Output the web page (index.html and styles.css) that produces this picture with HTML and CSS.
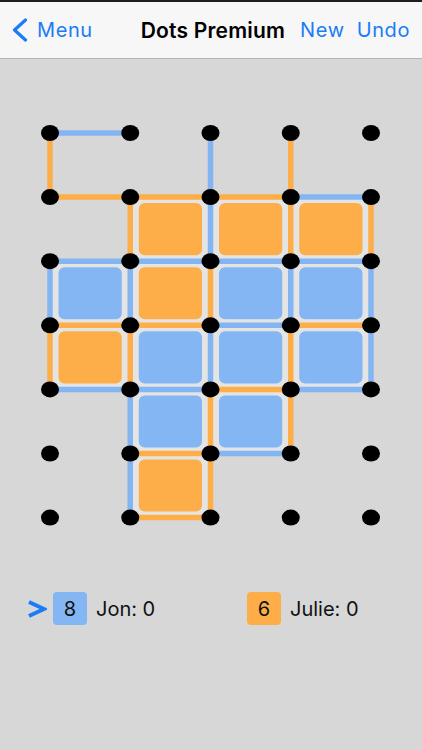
FILE: index.html
```html
<!DOCTYPE html>
<html>
<head>
<meta charset="utf-8">
<link rel="stylesheet" href="styles.css">
</head>
<body>
<header class="nav">
  <a class="back">
    <svg class="chev" width="16" height="24" viewBox="0 0 16 24"><polyline points="13.5,2 2.5,12 13.5,22" /></svg>
    <span>Menu</span>
  </a>
  <h1 class="title">Dots Premium</h1>
  <a class="btn new">New</a>
  <a class="btn undo">Undo</a>
</header>
<main class="board">
  <svg class="grid" width="422" height="521" viewBox="0 59 422 521">
    <g class="light">
      <rect x="132.25" y="199.1" width="76.25" height="60.1" rx="8"/>
      <rect x="212.5" y="199.1" width="76.25" height="60.1" rx="8"/>
      <rect x="292.75" y="199.1" width="76.25" height="60.1" rx="8"/>
      <rect x="52" y="263.2" width="76.25" height="60.1" rx="8"/>
      <rect x="132.25" y="263.2" width="76.25" height="60.1" rx="8"/>
      <rect x="212.5" y="263.2" width="76.25" height="60.1" rx="8"/>
      <rect x="292.75" y="263.2" width="76.25" height="60.1" rx="8"/>
      <rect x="52" y="327.3" width="76.25" height="60.1" rx="8"/>
      <rect x="132.25" y="327.3" width="76.25" height="60.1" rx="8"/>
      <rect x="212.5" y="327.3" width="76.25" height="60.1" rx="8"/>
      <rect x="292.75" y="327.3" width="76.25" height="60.1" rx="8"/>
      <rect x="132.25" y="391.4" width="76.25" height="60.1" rx="8"/>
      <rect x="212.5" y="391.4" width="76.25" height="60.1" rx="8"/>
      <rect x="132.25" y="455.5" width="76.25" height="60.1" rx="8"/>
    </g>
    <g class="ln ln-b">
      <line x1="50" y1="133" x2="130.25" y2="133"/>
      <line x1="290.75" y1="197.1" x2="371" y2="197.1"/>
      <line x1="50" y1="261.2" x2="371" y2="261.2"/>
      <line x1="210.5" y1="325.3" x2="290.75" y2="325.3"/>
      <line x1="50" y1="389.4" x2="210.5" y2="389.4"/>
      <line x1="290.75" y1="389.4" x2="371" y2="389.4"/>
      <line x1="210.5" y1="453.5" x2="290.75" y2="453.5"/>
      <line x1="50" y1="261.2" x2="50" y2="325.3"/>
      <line x1="130.25" y1="261.2" x2="130.25" y2="325.3"/>
      <line x1="130.25" y1="389.4" x2="130.25" y2="517.6"/>
      <line x1="210.5" y1="133" x2="210.5" y2="261.2"/>
      <line x1="210.5" y1="325.3" x2="210.5" y2="389.4"/>
      <line x1="290.75" y1="261.2" x2="290.75" y2="325.3"/>
      <line x1="371" y1="261.2" x2="371" y2="389.4"/>
    </g>
    <g class="ln ln-o">
      <line x1="50" y1="197.1" x2="290.75" y2="197.1"/>
      <line x1="50" y1="325.3" x2="210.5" y2="325.3"/>
      <line x1="290.75" y1="325.3" x2="371" y2="325.3"/>
      <line x1="210.5" y1="389.4" x2="290.75" y2="389.4"/>
      <line x1="130.25" y1="453.5" x2="210.5" y2="453.5"/>
      <line x1="130.25" y1="517.6" x2="210.5" y2="517.6"/>
      <line x1="50" y1="133" x2="50" y2="197.1"/>
      <line x1="50" y1="325.3" x2="50" y2="389.4"/>
      <line x1="130.25" y1="197.1" x2="130.25" y2="261.2"/>
      <line x1="130.25" y1="325.3" x2="130.25" y2="389.4"/>
      <line x1="210.5" y1="261.2" x2="210.5" y2="325.3"/>
      <line x1="210.5" y1="389.4" x2="210.5" y2="517.6"/>
      <line x1="290.75" y1="133" x2="290.75" y2="261.2"/>
      <line x1="290.75" y1="325.3" x2="290.75" y2="453.5"/>
      <line x1="371" y1="197.1" x2="371" y2="261.2"/>
    </g>
    <g class="sq-o">
      <rect x="138.75" y="203.1" width="63.25" height="52.1" rx="6"/>
      <rect x="219" y="203.1" width="63.25" height="52.1" rx="6"/>
      <rect x="299.25" y="203.1" width="63.25" height="52.1" rx="6"/>
      <rect x="138.75" y="267.2" width="63.25" height="52.1" rx="6"/>
      <rect x="58.5" y="331.3" width="63.25" height="52.1" rx="6"/>
      <rect x="138.75" y="459.5" width="63.25" height="52.1" rx="6"/>
    </g>
    <g class="sq-b">
      <rect x="58.5" y="267.2" width="63.25" height="52.1" rx="6"/>
      <rect x="219" y="267.2" width="63.25" height="52.1" rx="6"/>
      <rect x="299.25" y="267.2" width="63.25" height="52.1" rx="6"/>
      <rect x="138.75" y="331.3" width="63.25" height="52.1" rx="6"/>
      <rect x="219" y="331.3" width="63.25" height="52.1" rx="6"/>
      <rect x="299.25" y="331.3" width="63.25" height="52.1" rx="6"/>
      <rect x="138.75" y="395.4" width="63.25" height="52.1" rx="6"/>
      <rect x="219" y="395.4" width="63.25" height="52.1" rx="6"/>
    </g>
    <g class="dots">
      <ellipse cx="50" cy="133" rx="9" ry="8"/><ellipse cx="130.25" cy="133" rx="9" ry="8"/><ellipse cx="210.5" cy="133" rx="9" ry="8"/><ellipse cx="290.75" cy="133" rx="9" ry="8"/><ellipse cx="371" cy="133" rx="9" ry="8"/>
      <ellipse cx="50" cy="197.1" rx="9" ry="8"/><ellipse cx="130.25" cy="197.1" rx="9" ry="8"/><ellipse cx="210.5" cy="197.1" rx="9" ry="8"/><ellipse cx="290.75" cy="197.1" rx="9" ry="8"/><ellipse cx="371" cy="197.1" rx="9" ry="8"/>
      <ellipse cx="50" cy="261.2" rx="9" ry="8"/><ellipse cx="130.25" cy="261.2" rx="9" ry="8"/><ellipse cx="210.5" cy="261.2" rx="9" ry="8"/><ellipse cx="290.75" cy="261.2" rx="9" ry="8"/><ellipse cx="371" cy="261.2" rx="9" ry="8"/>
      <ellipse cx="50" cy="325.3" rx="9" ry="8"/><ellipse cx="130.25" cy="325.3" rx="9" ry="8"/><ellipse cx="210.5" cy="325.3" rx="9" ry="8"/><ellipse cx="290.75" cy="325.3" rx="9" ry="8"/><ellipse cx="371" cy="325.3" rx="9" ry="8"/>
      <ellipse cx="50" cy="389.4" rx="9" ry="8"/><ellipse cx="130.25" cy="389.4" rx="9" ry="8"/><ellipse cx="210.5" cy="389.4" rx="9" ry="8"/><ellipse cx="290.75" cy="389.4" rx="9" ry="8"/><ellipse cx="371" cy="389.4" rx="9" ry="8"/>
      <ellipse cx="50" cy="453.5" rx="9" ry="8"/><ellipse cx="130.25" cy="453.5" rx="9" ry="8"/><ellipse cx="210.5" cy="453.5" rx="9" ry="8"/><ellipse cx="290.75" cy="453.5" rx="9" ry="8"/><ellipse cx="371" cy="453.5" rx="9" ry="8"/>
      <ellipse cx="50" cy="517.6" rx="9" ry="8"/><ellipse cx="130.25" cy="517.6" rx="9" ry="8"/><ellipse cx="210.5" cy="517.6" rx="9" ry="8"/><ellipse cx="290.75" cy="517.6" rx="9" ry="8"/><ellipse cx="371" cy="517.6" rx="9" ry="8"/>
    </g>
  </svg>
  <section class="scores">
    <div class="player p1">
      <svg class="turn" width="20" height="18" viewBox="0 0 20 18"><polyline points="2,2 17,9 2,16"/></svg>
      <span class="box box-b">8</span>
      <span class="name">Jon: 0</span>
    </div>
    <div class="player p2">
      <span class="box box-o">6</span>
      <span class="name">Julie: 0</span>
    </div>
  </section>
</main>
</body>
</html>
```
FILE: styles.css
```css
html, body {
  margin: 0;
  padding: 0;
}
body {
  width: 422px;
  height: 750px;
  background: #d7d7d7;
  font-family: Inter, "Noto Sans", "Liberation Sans", sans-serif;
  overflow: hidden;
}
.nav {
  display: flex;
  align-items: center;
  height: 56px;
  padding: 0 12px 0 12px;
  background: #f7f7f7;
  border-top: 2px solid #1e1e1e;
  border-bottom: 1px solid #b3b3b3;
  color: #1a7cf7;
  font-size: 20px;
  letter-spacing: 0.6px;
}
.back {
  display: flex;
  align-items: center;
  gap: 9px;
}
.chev polyline {
  fill: none;
  stroke: #1a7cf7;
  stroke-width: 3.2;
  stroke-linecap: round;
  stroke-linejoin: round;
}
.title {
  margin: 0 0 0 auto;
  font-size: 21px;
  font-weight: 600;
  color: #000;
  letter-spacing: 0.2px;
}
.new {
  margin-left: 15px;
}
.undo {
  margin-left: 12px;
}
.board {
  display: block;
}
.grid {
  display: block;
}
.light rect {
  fill: #e4e4e4;
}
.ln line {
  stroke-width: 5.5;
  stroke-linecap: butt;
}
.ln-b line {
  stroke: #84b5f3;
}
.ln-o line {
  stroke: #fdae48;
}
.sq-b rect {
  fill: #84b6f4;
}
.sq-o rect {
  fill: #fdae48;
}
.dots ellipse {
  fill: #000;
}
.scores {
  display: flex;
  margin-top: 12px;
  padding-left: 27px;
  height: 33px;
  font-size: 20px;
  color: #111;
}
.player {
  display: flex;
  align-items: center;
}
.p1 {
  width: 220px;
}
.turn {
  margin-right: 6px;
}
.turn polyline {
  fill: none;
  stroke: #1a7cf7;
  stroke-width: 4;
  stroke-linejoin: miter;
}
.box {
  display: flex;
  align-items: center;
  justify-content: center;
  width: 34px;
  height: 33px;
  border-radius: 4px;
  margin-right: 9px;
}
.box-b {
  background: #84b6f4;
}
.box-o {
  background: #fdae48;
}
```
